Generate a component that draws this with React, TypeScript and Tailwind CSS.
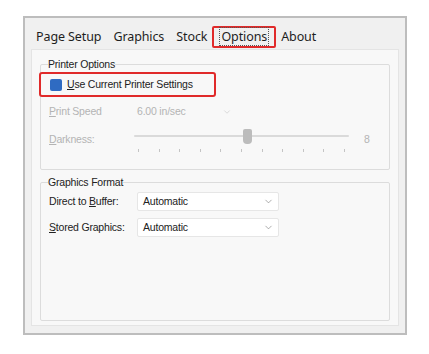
import { ChevronDown } from 'lucide-react'

const tabs = ['Page Setup', 'Graphics', 'Stock', 'Options', 'About']

function Combo({ value, className }: { value: string; className?: string }) {
  return (
    <div
      className={`flex h-[19px] w-[142px] items-center justify-between rounded-[2px] border border-[#e6e6e6] bg-white pl-[5px] pr-[4px] ${className ?? ''}`}
    >
      <span>{value}</span>
      <ChevronDown size={11} strokeWidth={1.3} className="text-[#777]" />
    </div>
  )
}

export default function App() {
  const ticks = Array.from({ length: 11 }, (_, i) => i)
  return (
    <div className="h-[354px] w-[429px] bg-white pl-[23px] pt-[16px] font-['Liberation_Sans',Arial,sans-serif] text-[10.5px] tracking-[-0.2px] text-[#222]">
      <div className="flex h-[319px] w-[384px] flex-col border-2 border-[#bdbdbd] bg-[#f0f0f0]">
        {/* tab strip */}
        <div className="flex h-[31px] items-center gap-[12px] pl-[11px] pt-[7px] font-['Noto_Sans',sans-serif] text-[12.5px] tracking-[-0.1px] text-[#1e1e1e]">
          {tabs.map((t) =>
            t === 'Options' ? (
              <span
                key={t}
                className="-mx-[7px] rounded-[2px] border-2 border-[#e02a2a] px-[5px] py-[1px] leading-[16px]"
              >
                <span className="border border-dotted border-[#555] px-[1px]">{t}</span>
              </span>
            ) : (
              <span key={t}>{t}</span>
            ),
          )}
        </div>
        {/* tab page */}
        <div className="mx-[6px] mb-[7px] flex flex-1 flex-col gap-[6px] border border-[#e4e4e4] bg-[#f8f8f8] px-[8px] pt-[8px] pb-[4px]">
          <fieldset className="h-[112px] rounded-[2px] border border-[#dcdcdc] px-[8px]">
            <legend className="-ml-[1px] px-[0px] leading-[13px]">Printer Options</legend>
            <div className="-ml-[10px] mt-[1px] flex h-[25px] w-[177px] items-center gap-[5px] rounded-[3px] border-2 border-[#e02a2a] pl-[9px]">
              <span className="h-[12px] w-[12px] rounded-[2px] bg-[#2f6bc2]" />
              <span>
                <u>U</u>se Current Printer Settings
              </span>
            </div>
            <div className="mt-[6px] flex h-[18px] items-center text-[#b4b4b4]">
              <span className="w-[88px]">
                <u>P</u>rint Speed
              </span>
              <div className="flex w-[95px] items-center justify-between">
                <span>6.00 in/sec</span>
                <ChevronDown size={10} strokeWidth={1.2} className="text-[#bbb]" />
              </div>
            </div>
            <div className="mt-[7px] flex items-start">
              <span className="mt-[4px] w-[85px] text-[#b4b4b4]">
                <u>D</u>arkness:
              </span>
              <div className="w-[215px]">
                <div className="relative h-[16px]">
                  <div className="absolute top-[7px] left-0 right-0 h-[2px] rounded bg-[#dadada]" />
                  <div className="absolute left-[109px] top-[1px] h-[15px] w-[9px] rounded-b-[4px] rounded-t-[2px] bg-[#bcbcbc]" />
                </div>
                <div className="mt-[5px] flex justify-between px-[4px]">
                  {ticks.map((i) => (
                    <span key={i} className="h-[3px] w-px bg-[#c4c4c4]" />
                  ))}
                </div>
              </div>
              <span className="ml-[15px] mt-[4px] text-[#b4b4b4]">8</span>
            </div>
          </fieldset>
          <fieldset className="flex-1 rounded-[2px] border border-[#dcdcdc] px-[8px]">
            <legend className="-ml-[1px] leading-[13px]">Graphics Format</legend>
            <div className="mt-[3px] flex items-center">
              <span className="w-[88px]">
                Direct to <u>B</u>uffer:
              </span>
              <Combo value="Automatic" />
            </div>
            <div className="mt-[7px] flex items-center">
              <span className="w-[88px]">
                <u>S</u>tored Graphics:
              </span>
              <Combo value="Automatic" />
            </div>
          </fieldset>
        </div>
      </div>
    </div>
  )
}
